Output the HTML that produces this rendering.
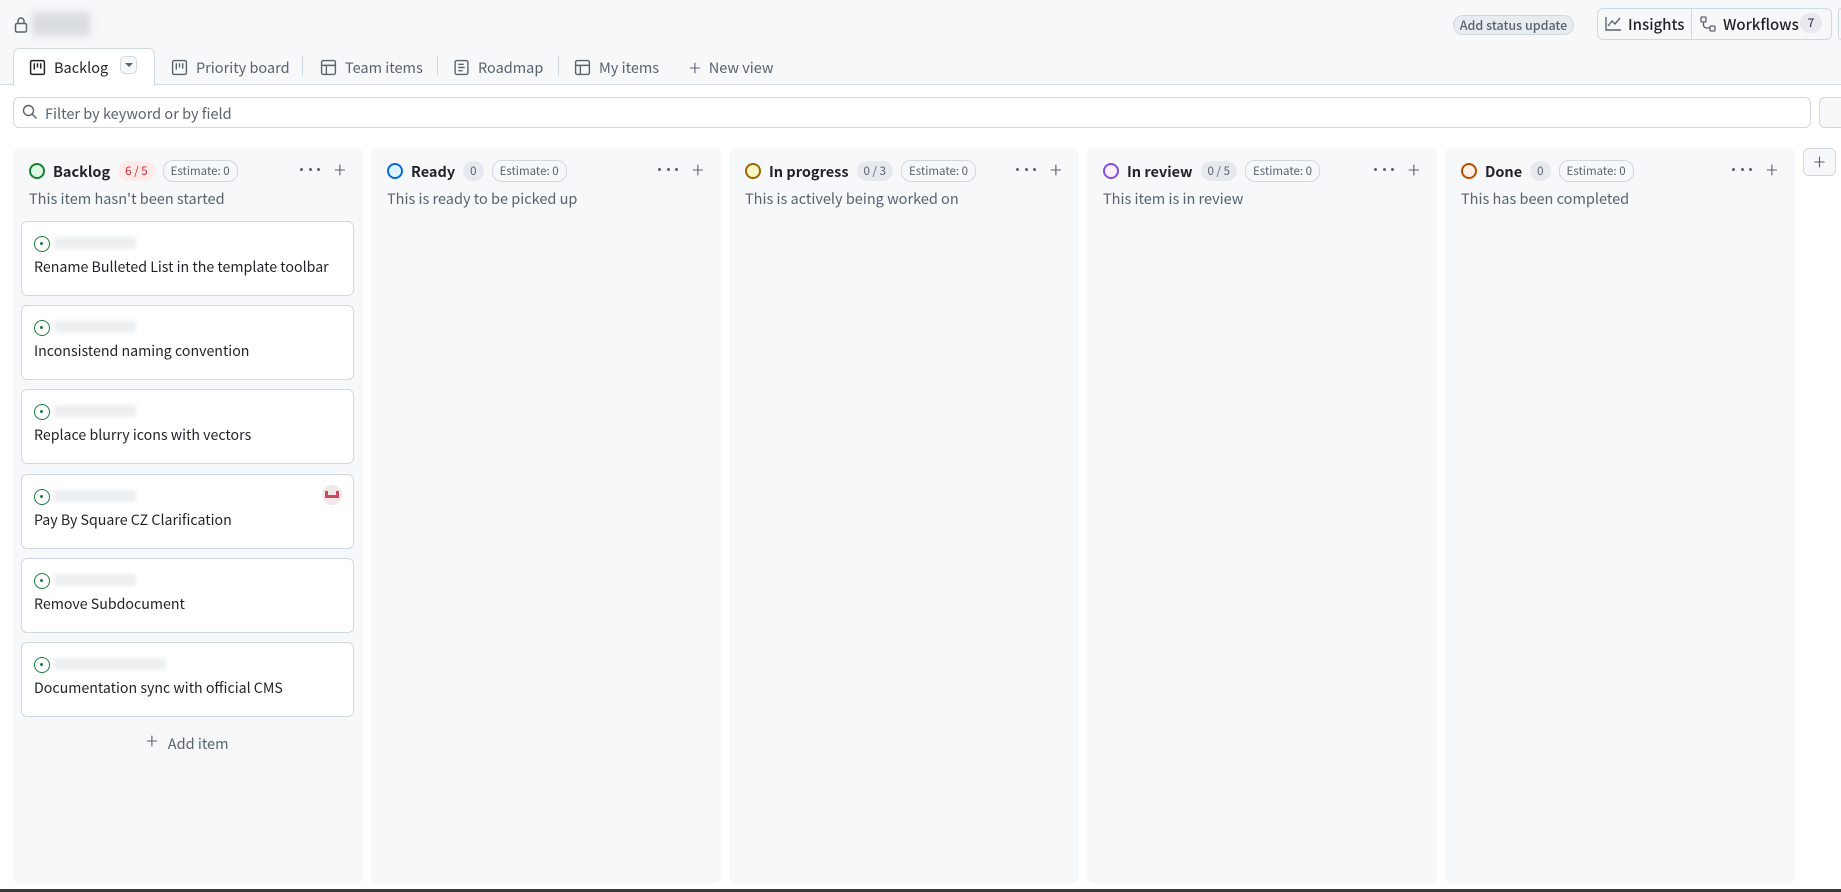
<!DOCTYPE html>
<html><head><meta charset="utf-8"><style>
*{box-sizing:border-box;margin:0;padding:0}
body{width:1841px;height:892px;overflow:hidden;background:#fff;font-family:"Noto Sans CJK JP","Liberation Sans",sans-serif;color:#1f2328;font-size:14.2px;position:relative}
.top{position:absolute;left:0;top:0;width:1841px;height:85px;background:#f6f8fa;border-bottom:1px solid #d1d9e0}
.abs{position:absolute}
.tab{position:absolute;top:56px;height:22px;display:flex;align-items:center;gap:8px;color:#59636e;font-size:14.5px}
.tab svg{width:17px;height:17px}
.sep{position:absolute;top:56px;width:1px;height:20px;background:#d1d9e0}
.col{position:absolute;top:148px;width:350px;height:735px;background:#f6f8fa;border-radius:6px}
.hdr{position:absolute;top:13px;left:16px;display:flex;align-items:center;gap:8px;height:20px}
.hdr b{font-weight:600;font-size:14.5px}
.cnt{background:#e6eaef;border-radius:10px;padding:0 7px;font-size:11.5px;height:20px;line-height:20px;color:#59636e}
.est{border:1px solid #d1d9e0;border-radius:10px;padding:0 7px;font-size:11.5px;height:22px;line-height:20px;color:#59636e}
.desc{position:absolute;top:40px;left:16px;color:#59636e;font-size:14.5px}
.dots{position:absolute;top:20px;left:287px;width:20px;height:6px;display:flex;justify-content:space-between}
.dots i{width:3px;height:3px;border-radius:50%;background:#59636e;display:block}
.plus{position:absolute;top:5px;left:321px;font-size:22px;color:#59636e;font-weight:300}
.card{position:absolute;left:8px;width:333px;height:75px;background:#fff;border:1px solid #d1d9e0;border-radius:6px}
.card .ic{position:absolute;left:12px;top:14px;width:16px;height:16px;border:1.6px solid #1a7f37;border-radius:50%}
.card .ic:after{content:"";position:absolute;left:5px;top:5px;width:3px;height:3px;background:#1a7f37;border-radius:50%}
.card .bl{position:absolute;left:32px;top:15px;width:82px;height:12px;background:#eceef0;border-radius:3px;filter:blur(2px)}
.card .t{position:absolute;left:12px;top:35px;font-size:14.2px}
</style></head><body>
<div class="top"></div>
<svg class="abs" style="left:14px;top:16px" width="14" height="17" viewBox="0 0 14 17"><rect x="1.5" y="7.5" width="11" height="8.5" rx="1.5" fill="none" stroke="#59636e" stroke-width="1.5"/><path d="M4 7.5V5a3 3 0 0 1 6 0v2.5" fill="none" stroke="#59636e" stroke-width="1.5"/></svg>
<div class="abs" style="left:32px;top:12px;width:58px;height:24px;background:#d9dcdf;filter:blur(4px);border-radius:4px"></div>

<div class="abs" style="left:1453px;top:15px;width:121px;height:20px;border:1px solid #d1d9e0;border-radius:10px;background:#e8ebef;font-size:12.5px;color:#59636e;text-align:center;line-height:18px;font-weight:500">Add status update</div>
<div class="abs" style="left:1597px;top:8px;width:235px;height:32px;border:1px solid #d1d9e0;border-radius:6px;background:#f6f8fa"></div>
<div class="abs" style="left:1691px;top:9px;width:1px;height:30px;background:#d1d9e0"></div>
<svg class="abs" style="left:1605px;top:16px" width="17" height="15" viewBox="0 0 17 15"><path d="M1 1v13h15M3 10l4-5 3 3 5-6" fill="none" stroke="#59636e" stroke-width="1.4"/></svg>
<div class="abs" style="left:1628px;top:14px;font-size:15px;font-weight:500">Insights</div>
<svg class="abs" style="left:1700px;top:16px" width="16" height="16" viewBox="0 0 16 16"><rect x="1" y="1" width="5" height="5" rx="1" fill="none" stroke="#59636e" stroke-width="1.3"/><rect x="10" y="10" width="5" height="5" rx="1" fill="none" stroke="#59636e" stroke-width="1.3"/><path d="M3.5 6v3a3 3 0 0 0 3 3H10" fill="none" stroke="#59636e" stroke-width="1.3"/></svg>
<div class="abs" style="left:1723px;top:14px;font-size:15px;font-weight:500">Workflows</div>
<div class="abs" style="left:1800px;top:13px;width:22px;height:20px;border-radius:10px;background:#e6eaef;font-size:12px;text-align:center;line-height:20px">7</div>
<div class="abs" style="left:1838px;top:8px;width:4px;height:32px;border:1px solid #d1d9e0;border-right:none;border-radius:6px 0 0 6px"></div>

<div class="abs" style="left:13px;top:48px;width:142px;height:38px;background:#fff;border:1px solid #d1d9e0;border-bottom:none;border-radius:6px 6px 0 0"></div>
<div class="tab" style="left:29px;color:#1f2328"><svg viewBox="0 0 16 16"><rect x="1.5" y="1.5" width="13" height="13" rx="1.5" fill="none" stroke="#1f2328" stroke-width="1.4"/><path d="M5 4v6M8 4v4M11 4v5" stroke="#1f2328" stroke-width="1.4"/></svg>Backlog</div>
<div class="abs" style="left:120px;top:56px;width:17px;height:18px;border:1px solid #d1d9e0;border-radius:5px;background:#f6f8fa"><div style="margin:6px 0 0 4px;width:0;height:0;border-left:4px solid transparent;border-right:4px solid transparent;border-top:4px solid #59636e"></div></div>
<div class="tab" style="left:171px"><svg viewBox="0 0 16 16"><rect x="1.5" y="1.5" width="13" height="13" rx="1.5" fill="none" stroke="#59636e" stroke-width="1.3"/><path d="M5 4v6M8 4v4M11 4v5" stroke="#59636e" stroke-width="1.3"/></svg>Priority board</div>
<div class="sep" style="left:302px"></div>
<div class="tab" style="left:320px"><svg viewBox="0 0 16 16"><rect x="1.5" y="1.5" width="13" height="13" rx="1.5" fill="none" stroke="#59636e" stroke-width="1.3"/><path d="M1.5 6h13M6 6v8.5" stroke="#59636e" stroke-width="1.3"/></svg>Team items</div>
<div class="sep" style="left:437px"></div>
<div class="tab" style="left:453px"><svg viewBox="0 0 16 16"><rect x="2" y="1.5" width="12" height="13" rx="1.5" fill="none" stroke="#59636e" stroke-width="1.3"/><path d="M5 5h5M5 8h6M5 11h4" stroke="#59636e" stroke-width="1.3"/></svg>Roadmap</div>
<div class="sep" style="left:558px"></div>
<div class="tab" style="left:574px"><svg viewBox="0 0 16 16"><rect x="1.5" y="1.5" width="13" height="13" rx="1.5" fill="none" stroke="#59636e" stroke-width="1.3"/><path d="M1.5 6h13M6 6v8.5" stroke="#59636e" stroke-width="1.3"/></svg>My items</div>
<div class="tab" style="left:689px"><span style="font-size:22px;font-weight:300">+</span>New view</div>

<div class="abs" style="left:13px;top:97px;width:1798px;height:31px;border:1px solid #d1d9e0;border-radius:6px;background:#fff"></div>
<svg class="abs" style="left:22px;top:104px" width="16" height="16" viewBox="0 0 16 16"><circle cx="6.5" cy="6.5" r="5" fill="none" stroke="#59636e" stroke-width="1.4"/><path d="M10 10l4.5 4.5" stroke="#59636e" stroke-width="1.4"/></svg>
<div class="abs" style="left:45px;top:103px;color:#59636e;font-size:14.5px">Filter by keyword or by field</div>
<div class="abs" style="left:1819px;top:97px;width:30px;height:31px;border:1px solid #d1d9e0;border-radius:6px;background:#f6f8fa"></div>

<div class="col" style="left:13px">
 <div class="hdr"><span style="width:16px;height:16px;border:2px solid #1a7f37;border-radius:50%;background:#dafbe1"></span><b>Backlog</b><span class="cnt" style="background:#ffebe9;color:#d1242f">6 / 5</span><span class="est">Estimate: 0</span></div>
 <div class="desc">This item hasn't been started</div>
 <div class="dots"><i></i><i></i><i></i></div><div class="plus">+</div>
 <div class="card" style="top:73px"><div class="ic"></div><div class="bl"></div><div class="t">Rename Bulleted List in the template toolbar</div></div>
 <div class="card" style="top:157px"><div class="ic"></div><div class="bl"></div><div class="t">Inconsistend naming convention</div></div>
 <div class="card" style="top:241px"><div class="ic"></div><div class="bl"></div><div class="t">Replace blurry icons with vectors</div></div>
 <div class="card" style="top:326px"><div class="ic"></div><div class="bl"></div><div class="t">Pay By Square CZ Clarification</div><div style="position:absolute;right:11px;top:10px;width:20px;height:20px;border-radius:50%;background:#f0e8ea"><div style="margin:6px 3px;width:14px;height:7px;border:3px solid #d0475e;border-top:none"></div></div></div>
 <div class="card" style="top:410px"><div class="ic"></div><div class="bl"></div><div class="t">Remove Subdocument</div></div>
 <div class="card" style="top:494px"><div class="ic"></div><div class="bl" style="width:112px"></div><div class="t">Documentation sync with official CMS</div></div>
 <div class="abs" style="left:133px;top:576px;color:#59636e;font-size:14.5px"><span style="font-size:22px;font-weight:300;margin-right:10px">+</span>Add item</div>
</div>
<div class="col" style="left:371px">
 <div class="hdr"><span style="width:16px;height:16px;border:2px solid #0969da;border-radius:50%;background:#ddf4ff"></span><b>Ready</b><span class="cnt">0</span><span class="est">Estimate: 0</span></div>
 <div class="desc">This is ready to be picked up</div>
 <div class="dots"><i></i><i></i><i></i></div><div class="plus">+</div>
</div>
<div class="col" style="left:729px">
 <div class="hdr"><span style="width:16px;height:16px;border:2px solid #9a6700;border-radius:50%;background:#fff8c5"></span><b>In progress</b><span class="cnt">0 / 3</span><span class="est">Estimate: 0</span></div>
 <div class="desc">This is actively being worked on</div>
 <div class="dots"><i></i><i></i><i></i></div><div class="plus">+</div>
</div>
<div class="col" style="left:1087px">
 <div class="hdr"><span style="width:16px;height:16px;border:2px solid #8250df;border-radius:50%;background:#fbefff"></span><b>In review</b><span class="cnt">0 / 5</span><span class="est">Estimate: 0</span></div>
 <div class="desc">This item is in review</div>
 <div class="dots"><i></i><i></i><i></i></div><div class="plus">+</div>
</div>
<div class="col" style="left:1445px">
 <div class="hdr"><span style="width:16px;height:16px;border:2px solid #bc4c00;border-radius:50%;background:#fff1e5"></span><b>Done</b><span class="cnt">0</span><span class="est">Estimate: 0</span></div>
 <div class="desc">This has been completed</div>
 <div class="dots"><i></i><i></i><i></i></div><div class="plus">+</div>
</div>
<div class="abs" style="left:1803px;top:148px;width:33px;height:28px;border:1px solid #d1d9e0;border-radius:6px;background:#f6f8fa;text-align:center;font-size:22px;line-height:24px;color:#59636e;font-weight:300">+</div>
<div class="abs" style="left:0;top:889px;width:1841px;height:3px;background:#3a3a3a"></div>
</body></html>
